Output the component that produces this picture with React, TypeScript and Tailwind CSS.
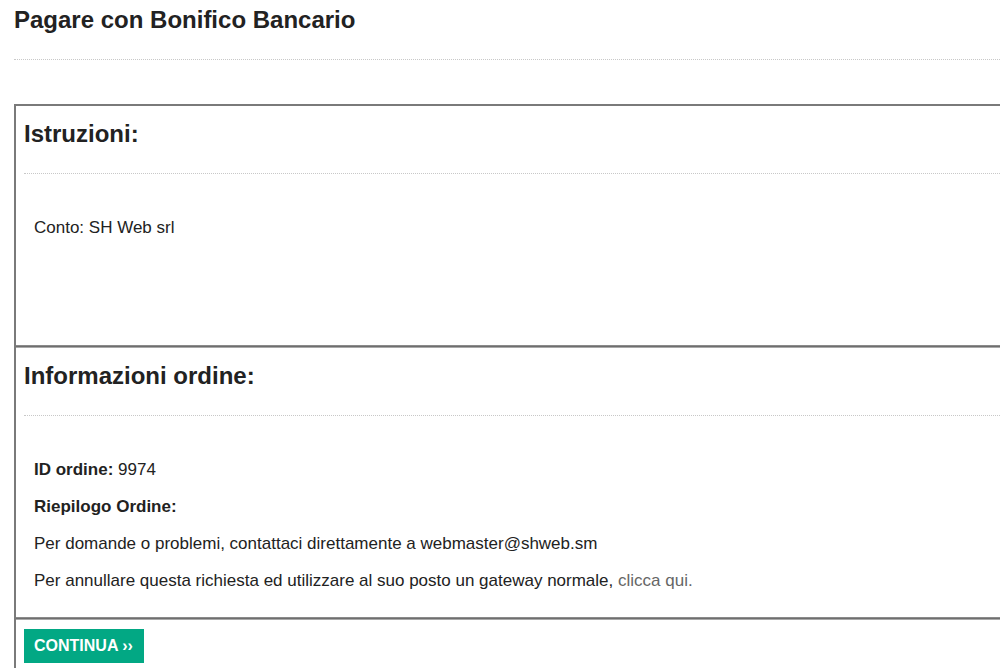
const Dotted = ({ className = "" }: { className?: string }) => (
  <div className={`border-t border-dotted border-[#c8c8c8] ${className}`} />
);

// thick rule between the boxed sections
const Separator = () => (
  <div className="h-[3px] border-t border-[#8a8a8a] bg-[#6e6e6e] border-b border-b-[#a9a9a9]" />
);

const App = () => {
  return (
    <div className="h-screen w-screen overflow-hidden bg-white">
      <div className="w-[1100px] pl-[14px] pt-[6px] font-['Liberation_Sans',Arial,sans-serif] text-[#222]">
        <h1 className="text-[24px] font-bold leading-[28px]">
          Pagare con Bonifico Bancario
        </h1>
        <Dotted className="mt-[25px]" />

        <div className="mt-[44px] border-l-2 border-t-2 border-[#7a7a7a]">
          {/* Istruzioni */}
          <section className="h-[239px] pl-[8px] pt-[14px]">
            <h2 className="text-[24px] font-bold leading-[28px]">Istruzioni:</h2>
            <Dotted className="mt-[25px]" />
            <div className="pl-[10px] pt-[42px] text-[17px] leading-[24px]">
              Conto: SH Web srl
            </div>
          </section>

          <Separator />

          {/* Informazioni ordine */}
          <section className="pl-[8px] pt-[14px] pb-[24px]">
            <h2 className="text-[24px] font-bold leading-[28px]">
              Informazioni ordine:
            </h2>
            <Dotted className="mt-[25px]" />
            <div className="flex flex-col gap-[13px] pl-[10px] pt-[42px] text-[17px] leading-[24px]">
              <p>
                <strong>ID ordine:</strong> 9974
              </p>
              <p>
                <strong>Riepilogo Ordine:</strong>
              </p>
              <p>Per domande o problemi, contattaci direttamente a webmaster@shweb.sm</p>
              <p>
                Per annullare questa richiesta ed utilizzare al suo posto un gateway normale,{" "}
                <a className="text-[#666]">clicca qui.</a>
              </p>
            </div>
          </section>

          <Separator />

          <section className="pl-[8px] pt-[9px] pb-[20px]">
            <button className="bg-[#02a884] pl-[10px] pr-[11px] py-[7px] text-[16px] font-bold uppercase leading-[20px] text-white">
              Continua ››
            </button>
          </section>
        </div>
      </div>
    </div>
  );
};

export default App;
